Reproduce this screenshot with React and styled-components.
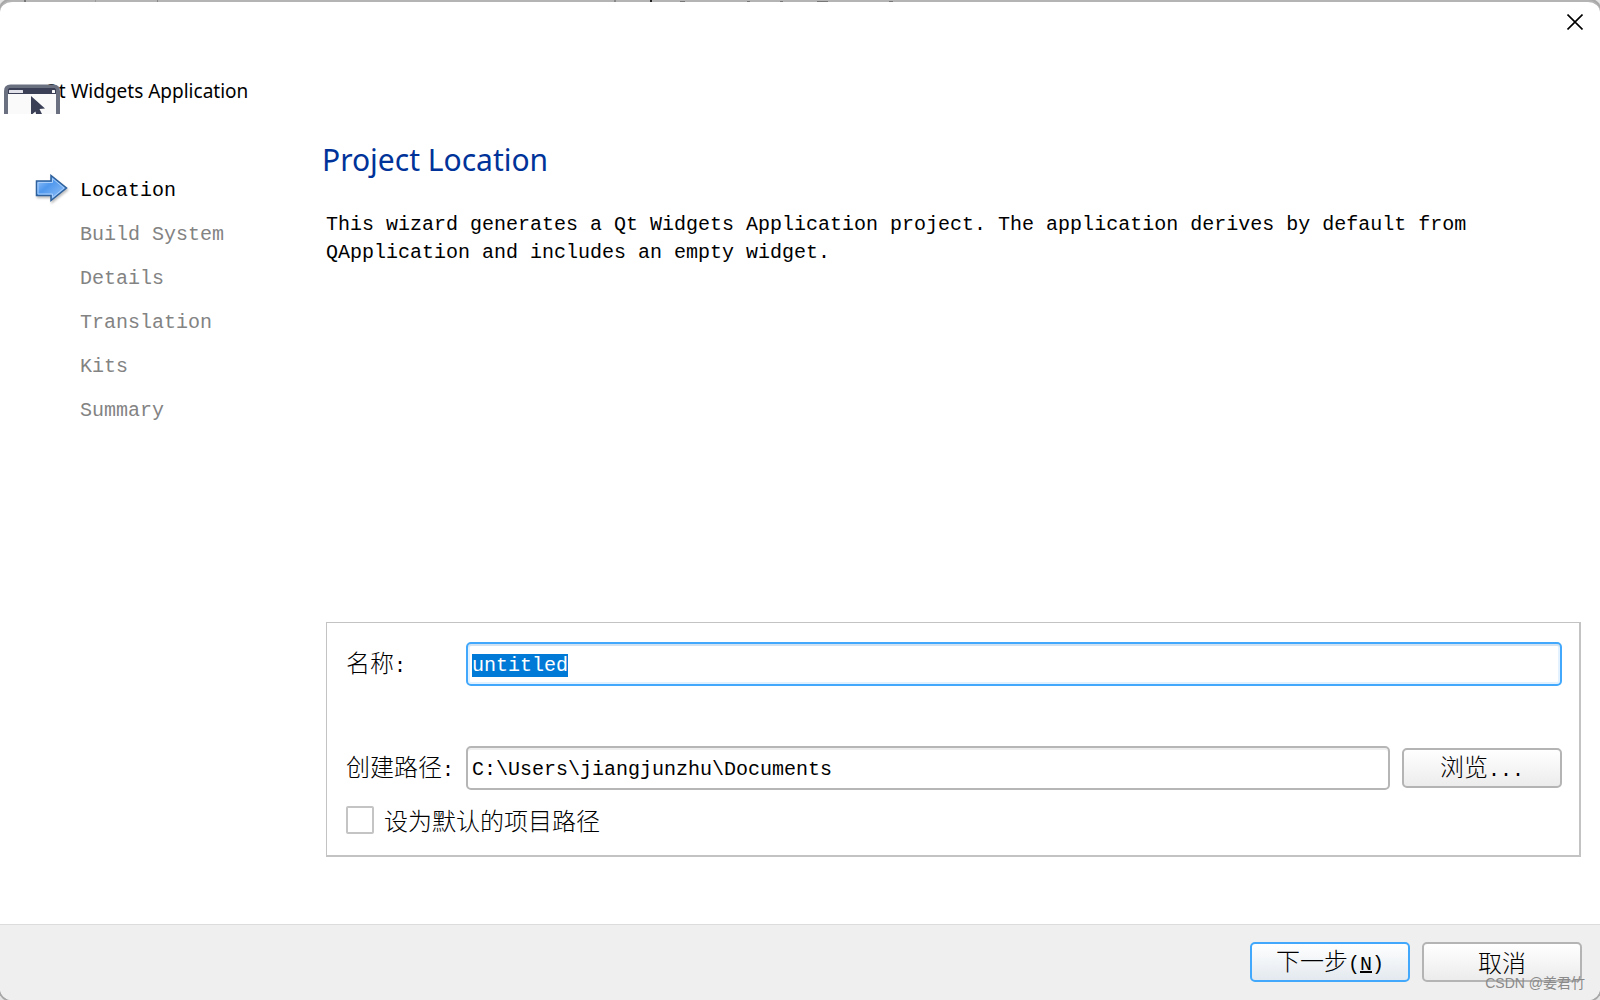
import React, { useEffect, useRef, useState } from 'react';
import styled, { createGlobalStyle, css } from 'styled-components';

const steps = ['Location', 'Build System', 'Details', 'Translation', 'Kits', 'Summary'];

const App = () => {
    const [name, setName] = useState('untitled');
    const [path, setPath] = useState('C:\\Users\\jiangjunzhu\\Documents');
    const [isDefault, setIsDefault] = useState(false);
    const nameRef = useRef(null);

    useEffect(() => {
        nameRef.current.focus();
        nameRef.current.select();
    }, []);

    return (
        <Desktop>
            <GlobalStyle />
            <BehindStrip />
            <Dialog>
                <TitleBar>
                    <CloseButton type="button" aria-label="Close">
                        <svg width="16" height="16" viewBox="0 0 16 16">
                            <path d="M0.5 0.5L15.5 15.5M15.5 0.5L0.5 15.5" stroke="#000" strokeWidth="1.6" fill="none" />
                        </svg>
                    </CloseButton>
                </TitleBar>
                <Header>
                    <WizardTitle>Qt Widgets Application</WizardTitle>
                    <WidgetIcon />
                </Header>
                <Body>
                    <StepList>
                        {steps.map((step, index) => (
                            <Step key={step} $active={index === 0}>
                                <StepMarker>{index === 0 && <ArrowIcon />}</StepMarker>
                                {step}
                            </Step>
                        ))}
                    </StepList>
                    <Page>
                        <PageTitle>Project Location</PageTitle>
                        <Description>
                            This wizard generates a Qt Widgets Application project. The application derives by default from QApplication and includes an empty widget.
                        </Description>
                        <Panel>
                            <Label htmlFor="name">名称<Mono>:</Mono></Label>
                            <NameInput
                                id="name"
                                ref={nameRef}
                                type="text"
                                spellCheck={false}
                                value={name}
                                onChange={(e) => setName(e.target.value)}
                            />
                            <Label htmlFor="path">创建路径<Mono>:</Mono></Label>
                            <TextInput
                                id="path"
                                type="text"
                                spellCheck={false}
                                value={path}
                                onChange={(e) => setPath(e.target.value)}
                            />
                            <Button type="button">浏览<Mono>...</Mono></Button>
                            <CheckLabel>
                                <CheckBox
                                    type="checkbox"
                                    checked={isDefault}
                                    onChange={(e) => setIsDefault(e.target.checked)}
                                />
                                设为默认的项目路径
                            </CheckLabel>
                        </Panel>
                    </Page>
                </Body>
                <Footer>
                    <Button type="button" $primary>下一步<Mono>(<u>N</u>)</Mono></Button>
                    <Button type="button">取消</Button>
                </Footer>
            </Dialog>
            <Watermark>CSDN @姜君竹</Watermark>
        </Desktop>
    );
};

// window with a mouse pointer, the lower half is cut off by the header
const WidgetIcon = () => (
    <WidgetSvg width="56" height="30" viewBox="0 0 56 30">
        <path d="M0 30V7Q0 0.5 6.5 0.5H49.5Q56 0.5 56 7V30Z" fill="#6b7080" />
        <path d="M4 30V5Q4 4 5 4H51Q52 4 52 5V30Z" fill="#fafafa" />
        <path d="M4 10V5Q4 4 5 4H51Q52 4 52 5V10Z" fill="#3b4056" />
        <rect x="5" y="6" width="14" height="3" rx="0.5" fill="#e2e2ea" />
        <rect x="48" y="6" width="3" height="3" rx="0.5" fill="#fafafa" />
        <path d="M27 12L41 24.5L35.5 25L38 30H32L31.5 27.5L28.5 30H27Z" fill="#3b4056" />
    </WidgetSvg>
);

const ArrowIcon = () => (
    <ArrowSvg width="34" height="32" viewBox="0 0 34 32">
        <defs>
            <linearGradient id="arrow" x1="0" y1="0" x2="1" y2="1">
                <stop offset="0" stopColor="#a5cbfa" />
                <stop offset="0.4" stopColor="#4f98ee" />
                <stop offset="1" stopColor="#9dc6f8" />
            </linearGradient>
        </defs>
        <path d="M2.5 7H17V1.5L32.5 14L17 26.5V21.5H2.5Z" fill="url(#arrow)" stroke="#2e619c" strokeWidth="1.5" />
        <path d="M4 20V8.5H18.5V4.5L30 14L18.5 23.5V20Z" fill="none" stroke="#a9cefb" strokeWidth="1" />
    </ArrowSvg>
);

const GlobalStyle = createGlobalStyle`
  * {
    box-sizing: border-box;
  }

  body {
    margin: 0;
    background: #e4e4e4;
  }
`;

const cjkFont = css`
  font-family: "Noto Sans CJK SC", sans-serif;
  font-weight: 300;
  font-size: 24px;
  line-height: 28px;
`;

const monoFont = css`
  font-family: "Liberation Mono", monospace;
  font-size: 20px;
`;

const Desktop = styled.div`
  position: relative;
  display: flex;
  min-height: 100vh;
  background: #e4e4e4;
  color: #000;
`;

const Dialog = styled.main`
  flex: 1;
  display: flex;
  flex-direction: column;
  border-top: 2px solid #b4b4b4;
  border-radius: 12px;
  background: #fff;
  overflow: hidden;
  box-shadow: 0 0 0 2px #a8a8a8;
`;

/* bits of the window behind, showing along the top edge */
const BehindStrip = styled.div`
  position: absolute;
  top: 0;
  left: 0;
  width: 100%;
  height: 2px;
  background:
    linear-gradient(#777, #777) 24px 0 / 2px 2px no-repeat,
    linear-gradient(#999, #999) 95px 0 / 1px 2px no-repeat,
    linear-gradient(#888, #888) 157px 0 / 1px 2px no-repeat,
    linear-gradient(#888, #888) 614px 0 / 2px 2px no-repeat,
    linear-gradient(#222, #222) 650px 0 / 2px 2px no-repeat,
    linear-gradient(#777, #777) 680px 1px / 5px 1px no-repeat,
    linear-gradient(#777, #777) 747px 1px / 3px 1px no-repeat,
    linear-gradient(#777, #777) 780px 1px / 3px 1px no-repeat,
    linear-gradient(#777, #777) 817px 1px / 11px 1px no-repeat,
    linear-gradient(#777, #777) 889px 1px / 4px 1px no-repeat;
`;

const TitleBar = styled.div`
  display: flex;
  justify-content: flex-end;
  height: 76px;
`;

const CloseButton = styled.button`
  display: flex;
  align-items: center;
  justify-content: center;
  width: 50px;
  height: 40px;
  padding: 0;
  border: none;
  background: transparent;
`;

const Header = styled.header`
  position: relative;
  height: 36px;
  padding-left: 44px;
`;

const WizardTitle = styled.div`
  font-family: "Noto Sans", sans-serif;
  font-size: 19px;
  line-height: 26px;
`;

const WidgetSvg = styled.svg`
  position: absolute;
  left: 4px;
  bottom: 0;
`;

const Body = styled.div`
  flex: 1;
  display: flex;
  padding: 24px 19px 67px 0;
`;

const StepList = styled.ol`
  flex: none;
  width: 322px;
  margin: 0;
  padding: 30px 0 0 34px;
  list-style: none;
`;

const Step = styled.li`
  display: flex;
  align-items: center;
  height: 44px;
  color: ${(props) => (props.$active ? '#000' : '#838383')};
  ${monoFont}
`;

const StepMarker = styled.span`
  width: 46px;
  height: 32px;
`;

const ArrowSvg = styled.svg`
  display: block;
  filter: drop-shadow(1px 2px 1px rgba(0, 0, 0, 0.25));
`;

const Page = styled.section`
  flex: 1;
  min-width: 0;
  display: flex;
  flex-direction: column;
  padding-left: 4px;
`;

const PageTitle = styled.h1`
  margin: 0 0 29px -4px;
  color: #003399;
  font-family: "Noto Sans", sans-serif;
  font-size: 30px;
  font-weight: 400;
  line-height: 44px;
`;

const Description = styled.p`
  max-width: 1160px;
  margin: 0 0 auto;
  ${monoFont}
  line-height: 28px;
`;

const Panel = styled.form`
  display: grid;
  grid-template-columns: 108px 1fr 160px;
  column-gap: 12px;
  align-items: center;
  padding: 19px 17px 21px 19px;
  border: 1px solid #c3c3c3;
  border-right-width: 2px;
  border-bottom-width: 2px;
`;

const Label = styled.label`
  ${cjkFont}
  white-space: nowrap;
`;

const Mono = styled.span`
  ${monoFont}
  font-weight: 400;
`;

const TextInput = styled.input`
  width: 100%;
  height: 44px;
  padding: 3px 4px 0;
  border: 2px solid #b6b6b6;
  border-radius: 5px;
  outline: none;
  background: #fff;
  color: #000;
  box-shadow: inset 0 2px 0 #efefef;
  ${monoFont}

  &:focus {
    border-color: #41a8fb;
    box-shadow: inset 0 2px 0 #d3e2f0, inset 0 0 0 2px #e3f2fe;
  }

  &::selection {
    background: rgba(0, 120, 215, 0.996);
    color: #fff;
  }
`;

const NameInput = styled(TextInput)`
  grid-column: 2 / 4;
  margin-bottom: 60px;

  ${Label}:has(+ &) {
    margin-bottom: 60px;
  }
`;

const Button = styled.button`
  width: 160px;
  height: 40px;
  padding: 0;
  border: 2px solid ${(props) => (props.$primary ? '#41a8fb' : '#b4b4b4')};
  border-radius: 5px;
  background: linear-gradient(#fff, ${(props) => (props.$primary ? '#e3e9ef' : '#ececec')});
  color: #000;
  ${cjkFont}
`;

const CheckLabel = styled.label`
  grid-column: 1 / 4;
  display: flex;
  align-items: center;
  gap: 10px;
  height: 28px;
  margin-top: 16px;
  ${cjkFont}
`;

const CheckBox = styled.input`
  appearance: none;
  width: 28px;
  height: 28px;
  margin: 0;
  border: 2px solid #c4c4c4;
  border-radius: 2px;
  background: #fff;

  &:checked {
    background: #41a8fb;
  }
`;

const Footer = styled.footer`
  display: flex;
  justify-content: flex-end;
  gap: 12px;
  height: 76px;
  padding: 17px 18px 0;
  border-top: 1px solid #dcdcdc;
  background: #efefef;
`;

const Watermark = styled.div`
  position: absolute;
  right: 15px;
  bottom: 6px;
  color: #8a8a8a;
  font-family: "Liberation Sans", "Noto Sans CJK SC", sans-serif;
  font-size: 14px;
  line-height: 22px;
`;

export default App;
